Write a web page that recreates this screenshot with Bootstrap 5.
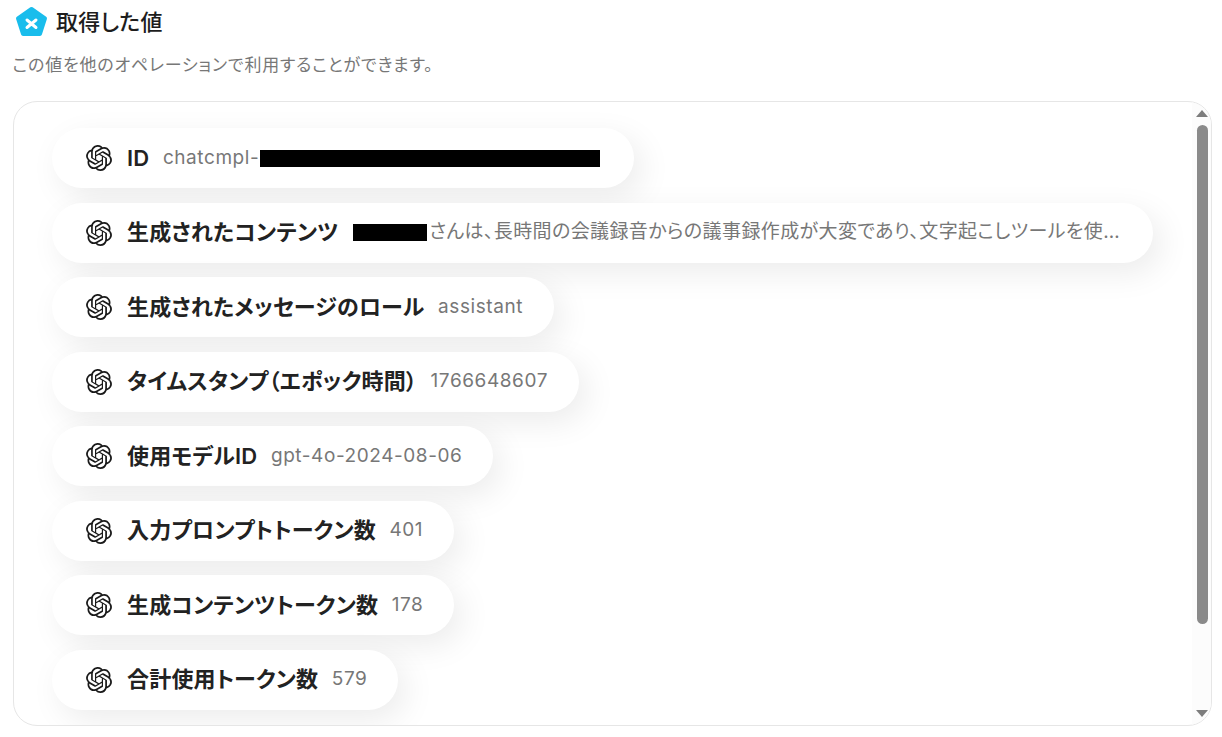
<!DOCTYPE html>
<html lang="ja">
<head>
<meta charset="utf-8">
<title>取得した値</title>
<link href="https://cdn.jsdelivr.net/npm/bootstrap@5.3.0/dist/css/bootstrap.min.css" rel="stylesheet">
<style>
html,body{height:737px;overflow:hidden;background:#fff}
body{font-family:Inter,"Noto Sans CJK JP",sans-serif;color:#212529;font-feature-settings:"palt"}
.page-wrap{padding:6px 10px 0 13px}
.head-row{height:32px;margin-left:2px}
.head-title{font-size:22px;font-weight:500;color:#1d1d1d;line-height:32px;margin:0;letter-spacing:.2px}
.head-sub{font-size:17px;color:#777;margin:15px 0 0 -.5px;line-height:24px;letter-spacing:.8px}
.val-box{position:relative;height:625px;margin-top:24px;border:1px solid #e6e6e6;border-radius:24px;overflow:hidden;background:#fff}
.pill-stack{gap:14.5px;padding:26px 0 0 38px}
.val-pill{height:60px;border-radius:30px;background:#fff;box-shadow:8px 10px 32px rgba(0,0,0,.08);padding:0 31px 0 34px;gap:13.5px;width:fit-content;white-space:nowrap}
.pill-icon{width:26px;height:26px;flex:none;margin-right:1.5px}
.pill-label{font-size:22px;font-weight:600;color:#222;letter-spacing:.2px}
.pill-val{font-size:19px;color:#777;letter-spacing:.03em}
.val-long{letter-spacing:.39px;margin-right:2px}
.ink-bar{display:inline-block;height:17px;background:#000;vertical-align:-3px}
.ink-a{width:340px;margin-left:1px;margin-right:3px}
.ink-b{width:74px;margin-left:1px;margin-right:2px}
.sb-track{position:absolute;top:0;right:0;bottom:0;width:19px;background:#fcfcfc}
.sb-thumb{position:absolute;top:23px;left:5px;width:11px;height:499px;border-radius:6px;background:#8a8a8a}
.sb-up,.sb-down{position:absolute;left:4px;width:0;height:0;border-left:6.5px solid transparent;border-right:6.5px solid transparent}
.sb-up{top:8px;border-bottom:7px solid #7d7d7d}
.sb-down{bottom:8px;border-top:7px solid #7d7d7d}
</style>
</head>
<body>
<svg width="0" height="0" class="d-block"><defs><symbol id="oai" viewBox="0 0 24 24"><path fill="#1a1a1a" d="M22.2819 9.8211a5.9847 5.9847 0 0 0-.5157-4.9108 6.0462 6.0462 0 0 0-6.5098-2.9A6.0651 6.0651 0 0 0 4.9807 4.1818a5.9847 5.9847 0 0 0-3.9977 2.9 6.0462 6.0462 0 0 0 .7427 7.0966 5.98 5.98 0 0 0 .511 4.9107 6.051 6.051 0 0 0 6.5146 2.9001A5.9847 5.9847 0 0 0 13.2599 24a6.0557 6.0557 0 0 0 5.7718-4.2058 5.9894 5.9894 0 0 0 3.9977-2.9001 6.0557 6.0557 0 0 0-.7475-7.0729zm-9.022 12.6081a4.4755 4.4755 0 0 1-2.8764-1.0408l.1419-.0804 4.7783-2.7582a.7948.7948 0 0 0 .3927-.6813v-6.7369l2.02 1.1686a.071.071 0 0 1 .038.052v5.5826a4.504 4.504 0 0 1-4.4945 4.4944zm-9.6607-4.1254a4.4708 4.4708 0 0 1-.5346-3.0137l.142.0852 4.783 2.7582a.7712.7712 0 0 0 .7806 0l5.8428-3.3685v2.3324a.0804.0804 0 0 1-.0332.0615L9.74 19.9502a4.4992 4.4992 0 0 1-6.1408-1.6464zM2.3408 7.8956a4.485 4.485 0 0 1 2.3655-1.9728V11.6a.7664.7664 0 0 0 .3879.6765l5.8144 3.3543-2.0201 1.1685a.0757.0757 0 0 1-.071 0l-4.8303-2.7865A4.504 4.504 0 0 1 2.3408 7.872zm16.5963 3.8558L13.1038 8.364 15.1192 7.2a.0757.0757 0 0 1 .071 0l4.8303 2.7913a4.4944 4.4944 0 0 1-.6765 8.1042v-5.6772a.79.79 0 0 0-.407-.667zm2.0107-3.0231l-.142-.0852-4.7735-2.7818a.7759.7759 0 0 0-.7854 0L9.409 9.2297V6.8974a.0662.0662 0 0 1 .0284-.0615l4.8303-2.7866a4.4992 4.4992 0 0 1 6.6802 4.66zM8.3065 12.863l-2.02-1.1638a.0804.0804 0 0 1-.038-.0567V6.0742a4.4992 4.4992 0 0 1 7.3757-3.4537l-.142.0805L8.704 5.459a.7948.7948 0 0 0-.3927.6813zm1.0976-2.3654l2.602-1.4998 2.6069 1.4998v2.9994l-2.5974 1.4997-2.6067-1.4997Z"/></symbol></defs></svg>
<div class="page-wrap">
  <div class="head-row d-flex align-items-center gap-2">
    <svg width="33" height="32" viewBox="0 0 33 32"><path fill="#19bdec" stroke="#19bdec" stroke-width="4" stroke-linejoin="round" d="M16.5 3 L30 12.5 L25 28 L8 28 L3 12.5 Z"/><path fill="none" stroke="#fff" stroke-width="3" stroke-linecap="round" d="M12 14 L21 21.5 M21 14 L12 21.5"/></svg>
    <h1 class="head-title">取得した値</h1>
  </div>
  <p class="head-sub">この値を他のオペレーションで利用することができます。</p>
  <div class="val-box">
    <div class="pill-stack d-flex flex-column">
      <div class="val-pill d-flex align-items-center"><svg class="pill-icon"><use href="#oai"/></svg><span class="pill-label">ID</span><span class="pill-val">chatcmpl-<span class="ink-bar ink-a"></span></span></div>
      <div class="val-pill d-flex align-items-center"><svg class="pill-icon"><use href="#oai"/></svg><span class="pill-label">生成されたコンテンツ</span><span class="pill-val val-long"><span class="ink-bar ink-b"></span>さんは、長時間の会議録音からの議事録作成が大変であり、文字起こしツールを使…</span></div>
      <div class="val-pill d-flex align-items-center"><svg class="pill-icon"><use href="#oai"/></svg><span class="pill-label">生成されたメッセージのロール</span><span class="pill-val">assistant</span></div>
      <div class="val-pill d-flex align-items-center"><svg class="pill-icon"><use href="#oai"/></svg><span class="pill-label">タイムスタンプ（エポック時間）</span><span class="pill-val">1766648607</span></div>
      <div class="val-pill d-flex align-items-center"><svg class="pill-icon"><use href="#oai"/></svg><span class="pill-label">使用モデルID</span><span class="pill-val">gpt-4o-2024-08-06</span></div>
      <div class="val-pill d-flex align-items-center"><svg class="pill-icon"><use href="#oai"/></svg><span class="pill-label">入力プロンプトトークン数</span><span class="pill-val">401</span></div>
      <div class="val-pill d-flex align-items-center"><svg class="pill-icon"><use href="#oai"/></svg><span class="pill-label">生成コンテンツトークン数</span><span class="pill-val">178</span></div>
      <div class="val-pill d-flex align-items-center"><svg class="pill-icon"><use href="#oai"/></svg><span class="pill-label">合計使用トークン数</span><span class="pill-val">579</span></div>
    </div>
    <div class="sb-track"><div class="sb-up"></div><div class="sb-thumb"></div><div class="sb-down"></div></div>
  </div>
</div>
</body>
</html>
